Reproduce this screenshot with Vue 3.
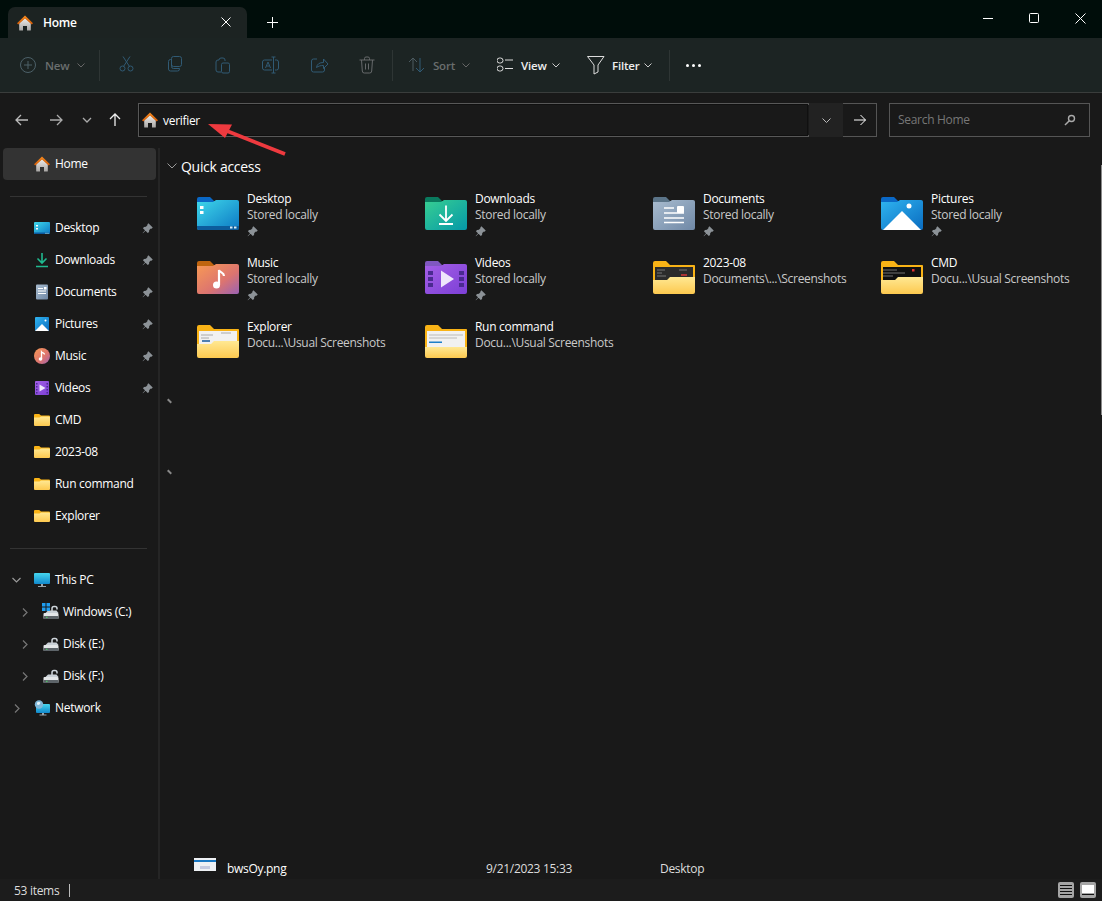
<script setup>
const pinned = [
  { name: "Desktop", icon: "nav-desktop" },
  { name: "Downloads", icon: "nav-downloads" },
  { name: "Documents", icon: "nav-documents" },
  { name: "Pictures", icon: "nav-pictures" },
  { name: "Music", icon: "nav-music" },
  { name: "Videos", icon: "nav-videos" },
];
const folders = ["CMD", "2023-08", "Run command", "Explorer"];
const drives = [
  { name: "Windows (C:)", icon: "drive-win" },
  { name: "Disk (E:)", icon: "drive-plain" },
  { name: "Disk (F:)", icon: "drive-plain" },
];
const quick = [
  { name: "Desktop", sub: "Stored locally", icon: "f-desktop", pin: true },
  { name: "Downloads", sub: "Stored locally", icon: "f-downloads", pin: true },
  { name: "Documents", sub: "Stored locally", icon: "f-documents", pin: true },
  { name: "Pictures", sub: "Stored locally", icon: "f-pictures", pin: true },
  { name: "Music", sub: "Stored locally", icon: "f-music", pin: true },
  { name: "Videos", sub: "Stored locally", icon: "f-videos", pin: true },
  { name: "2023-08", sub: "Documents\\...\\Screenshots", icon: "f-dark" },
  { name: "CMD", sub: "Docu...\\Usual Screenshots", icon: "f-cmd" },
  { name: "Explorer", sub: "Docu...\\Usual Screenshots", icon: "f-light" },
  { name: "Run command", sub: "Docu...\\Usual Screenshots", icon: "f-run" },
];
const actions = [
  "M3 13.5a2.5 2.5 0 1 0 5 0a2.5 2.5 0 1 0-5 0M11 13.5a2.5 2.5 0 1 0 5 0a2.5 2.5 0 1 0-5 0M6.5 11.5 13 1.5M12.5 11.5 6 1.5",
  "M3.5 6.5a2 2 0 0 1 2-2h1v7a2 2 0 0 0 2 2h6v.5a2 2 0 0 1-2 2h-7a2 2 0 0 1-2-2zM8.5 1.5h6a2 2 0 0 1 2 2v6a2 2 0 0 1-2 2h-6a2 2 0 0 1-2-2v-6a2 2 0 0 1 2-2z",
  "M6 5h-1a2 2 0 0 0-2 2v8a2 2 0 0 0 2 2h3M6 5a2 2 0 0 1 2-2h2a2 2 0 0 1 2 2v1M10 8h5a1.5 1.5 0 0 1 1.5 1.5v7a1.5 1.5 0 0 1-1.5 1.5h-5a1.5 1.5 0 0 1-1.5-1.5v-7a1.5 1.5 0 0 1 1.5-1.5z",
  "M11 5H3.5a2 2 0 0 0-2 2v6a2 2 0 0 0 2 2H11M14 5h1.500a2 2 0 0 1 2 2v6a2 2 0 0 1-2 2H14M12.500 2v16M10.500 2h4M10.500 18h4M4.500 13 7 7l2.500 6M5.500 11h3",
  "M8 4H4.500a2 2 0 0 0-2 2v9a2 2 0 0 0 2 2h9a2 2 0 0 0 2-2v-3M7.500 12.500c.5-3.500 3-5 7-5V4l4.500 5-4.500 4.500V10.500c-3 0-5 .5-7 2z",
  "M2.500 5h15M7.500 5V3.500a1.500 1.500 0 0 1 1.500-1.500h2a1.500 1.500 0 0 1 1.500 1.500V5M4.500 5l.8 11a2 2 0 0 0 2 2h5.400a2 2 0 0 0 2-2l.8-11M8.500 8.500v6M11.500 8.500v6",
];
</script>

<template>
  <div class="window">
    <!-- shared icon symbols -->
    <svg class="defs" width="0" height="0" aria-hidden="true">
      <defs>
        <linearGradient id="g-blue" x1="0" y1="0" x2="1" y2="1"><stop offset="0" stop-color="#3fd8ea" /><stop offset="1" stop-color="#0c78c4" /></linearGradient>
        <linearGradient id="g-teal" x1="0" y1="0" x2="1" y2="1"><stop offset="0" stop-color="#37cf92" /><stop offset="1" stop-color="#0598a8" /></linearGradient>
        <linearGradient id="g-grey" x1="0" y1="0" x2="1" y2="1"><stop offset="0" stop-color="#a9bccf" /><stop offset="1" stop-color="#6f88a6" /></linearGradient>
        <linearGradient id="g-pic" x1="0" y1="0" x2="1" y2="1"><stop offset="0" stop-color="#2fb4f0" /><stop offset="1" stop-color="#0a6cc0" /></linearGradient>
        <linearGradient id="g-music" x1="0" y1="0" x2="1" y2="1"><stop offset="0" stop-color="#f89a54" /><stop offset=".6" stop-color="#dc7470" /><stop offset="1" stop-color="#9a62b4" /></linearGradient>
        <linearGradient id="g-video" x1="0" y1="0" x2="1" y2="1"><stop offset="0" stop-color="#a45fe6" /><stop offset="1" stop-color="#7c3fd6" /></linearGradient>
        <linearGradient id="g-yellow" x1="0" y1="0" x2="0" y2="1"><stop offset="0" stop-color="#ffe893" /><stop offset="1" stop-color="#fdc94f" /></linearGradient>
        <linearGradient id="g-roof" x1="0" y1="0" x2="0" y2="1"><stop offset="0" stop-color="#f58a1f" /><stop offset="1" stop-color="#d25a06" /></linearGradient>
        <linearGradient id="g-wall" x1="0" y1="0" x2="0" y2="1"><stop offset="0" stop-color="#f0eeec" /><stop offset="1" stop-color="#a8a6a4" /></linearGradient>
        <linearGradient id="g-screen" x1="0" y1="0" x2="0" y2="1"><stop offset="0" stop-color="#45d6ee" /><stop offset="1" stop-color="#1188cc" /></linearGradient>

        <symbol id="home" viewBox="0 0 16 16">
          <path d="M2.200 8 8 3 13.800 8v7a.5.5 0 0 1-.5.5h-3.300V11H6v4.500H2.700a.5.5 0 0 1-.5-.5z" fill="url(#g-wall)" />
          <path d="M0 8.200 8 .5l8 7.700-1.300 1.300L8 3.400 1.300 9.500z" fill="url(#g-roof)" />
        </symbol>
        <symbol id="folder" viewBox="0 0 16 14">
          <path d="M0 2a1 1 0 0 1 1-1h4.200L7 2.500h8a1 1 0 0 1 1 1V6H0z" fill="#f9b316" />
          <path d="M0 4.500h5.500L7 3.500h8a1 1 0 0 1 1 1V12a1 1 0 0 1-1 1H1a1 1 0 0 1-1-1z" fill="url(#g-yellow)" />
        </symbol>

        <symbol id="nav-desktop" viewBox="0 0 16 16">
          <rect x="0" y="2" width="16" height="12" rx="1" fill="url(#g-blue)" />
          <path d="M0 12.500h16V13a1 1 0 0 1-1 1H1a1 1 0 0 1-1-1z" fill="#0a5aa0" />
          <rect x="2" y="5" width="2" height="1.500" fill="#fff" /><rect x="2" y="8" width="2" height="1.500" fill="#fff" />
          <rect x="11.500" y="12.800" width="1" height="1" fill="#cfe" /><rect x="13.500" y="12.800" width="1" height="1" fill="#cfe" />
        </symbol>
        <symbol id="nav-downloads" viewBox="0 0 16 16">
          <path d="M8 1v9.500M3.500 6.500 8 11 12.500 6.500M2 14.500h12" fill="none" stroke="#20b98f" stroke-width="1.600" />
        </symbol>
        <symbol id="nav-documents" viewBox="0 0 16 16">
          <rect x="2" y="0.500" width="12" height="15" rx="1" fill="url(#g-grey)" />
          <path d="M4 4.500h5M4 7h8M4 9.500h8" stroke="#fff" stroke-width="1" /><rect x="10" y="3" width="2.500" height="2.500" fill="#fff" />
        </symbol>
        <symbol id="nav-pictures" viewBox="0 0 16 16">
          <rect x="1" y="1" width="14" height="14" rx="1" fill="url(#g-pic)" />
          <path d="M1 15 8 8l7 7z" fill="#fff" /><circle cx="11.500" cy="4.500" r="1" fill="#fff" />
        </symbol>
        <symbol id="nav-music" viewBox="0 0 16 16">
          <circle cx="8" cy="8" r="8" fill="url(#g-music)" />
          <circle cx="6.500" cy="11" r="1.800" fill="#fff" /><path d="M7.500 11V3.800c1 1.400 3 1 3 2.700" fill="none" stroke="#fff" stroke-width="1.300" />
        </symbol>
        <symbol id="nav-videos" viewBox="0 0 16 16">
          <rect x="1" y="1" width="14" height="14" rx="1" fill="url(#g-video)" />
          <path d="M5.500 4.500 11.500 8 5.500 11.500z" fill="#eee6fb" />
          <path d="M2 3h1.500v1.500H2zM2 6h1.500v1.500H2zM2 9h1.500v1.500H2zM2 12h1.500v1.500H2zM12.500 3H14v1.500h-1.500zM12.500 6H14v1.500h-1.500zM12.500 9H14v1.500h-1.500zM12.500 12H14v1.500h-1.500z" fill="#4a2a90" />
        </symbol>
        <symbol id="monitor" viewBox="0 0 16 16">
          <rect x="0" y="1" width="16" height="11" rx="1" fill="url(#g-screen)" />
          <path d="M7 12h2v2h3v1H4v-1h3z" fill="#9aa4aa" />
        </symbol>
        <symbol id="drive" viewBox="0 0 16 16">
          <path d="M9 6.500V3.500a2 2 0 0 1 2-2h1a2 2 0 0 1 2 2v1" fill="none" stroke="#cfd6dc" stroke-width="1.500" />
          <path d="M2.500 8 5 5.500h8.500L15.500 8z" fill="#c9d0d6" />
          <rect x="0.500" y="8" width="15" height="6" rx="1" fill="#e3e6e8" />
          <rect x="0.500" y="11" width="15" height="3" rx=".8" fill="#5d6469" />
          <rect x="3" y="11.800" width="1.500" height="1" fill="#4cd964" />
        </symbol>
        <symbol id="drive-plain" viewBox="0 0 20 18">
          <use href="#drive" x="1" y="2" width="16" height="16" />
        </symbol>
        <symbol id="drive-win" viewBox="0 0 20 18">
          <use href="#drive" x="1" y="2" width="16" height="16" />
          <path d="M0 0h3.500v3.500H0zM4.500 0H8v3.500H4.500zM0 4.500h3.500V8H0zM4.500 4.500H8V8H4.500z" fill="#1e9df0" />
        </symbol>
        <symbol id="network" viewBox="0 0 16 16">
          <rect x="2" y="4" width="14" height="9" rx="1" fill="url(#g-screen)" />
          <path d="M8 13h2v1.500h2.500v1h-7v-1H8z" fill="#9aa4aa" />
          <circle cx="5" cy="4.500" r="4.200" fill="#7fb7d8" /><path d="M3 2.500c1.500-1 3-.5 3.500.5L5 5 3 4.500z" fill="#e6f4fb" />
        </symbol>

        <symbol id="tab-back" viewBox="0 0 42 34">
          <path d="M0 3a2 2 0 0 1 2-2h11l4 4h23a2 2 0 0 1 2 2v10H0z" />
        </symbol>
        <symbol id="f-desktop" viewBox="0 0 42 34">
          <use href="#tab-back" fill="#0a68c6" />
          <path d="M0 6h16l3-2h21a2 2 0 0 1 2 2v26a2 2 0 0 1-2 2H2a2 2 0 0 1-2-2z" fill="url(#g-blue)" />
          <path d="M0 30h42v2a2 2 0 0 1-2 2H2a2 2 0 0 1-2-2z" fill="#0c5c9c" />
          <rect x="3" y="10" width="3.500" height="3" fill="#fff" /><rect x="3" y="15" width="3.500" height="3" fill="#fff" />
          <rect x="33" y="30.500" width="2.500" height="2" fill="#d8eef8" /><rect x="37" y="30.500" width="2.500" height="2" fill="#d8eef8" />
        </symbol>
        <symbol id="f-downloads" viewBox="0 0 42 34">
          <use href="#tab-back" fill="#0a7a5e" />
          <path d="M0 6h16l3-2h21a2 2 0 0 1 2 2v26a2 2 0 0 1-2 2H2a2 2 0 0 1-2-2z" fill="url(#g-teal)" />
          <path d="M21 9.500v15M14.500 18.500l6.500 6.500 6.500-6.500M14 28h14" fill="none" stroke="#fff" stroke-width="1.800" />
        </symbol>
        <symbol id="f-documents" viewBox="0 0 42 34">
          <use href="#tab-back" fill="#5b7488" />
          <path d="M0 6h16l3-2h21a2 2 0 0 1 2 2v26a2 2 0 0 1-2 2H2a2 2 0 0 1-2-2z" fill="url(#g-grey)" />
          <path d="M11 12h10M11 17h20M11 22h20M11 26.500h20" stroke="#fff" stroke-width="1.600" />
          <rect x="24" y="10" width="7" height="7" rx="1" fill="#fff" />
        </symbol>
        <symbol id="f-pictures" viewBox="0 0 42 34">
          <use href="#tab-back" fill="#0a68c6" />
          <path d="M0 6h16l3-2h21a2 2 0 0 1 2 2v26a2 2 0 0 1-2 2H2a2 2 0 0 1-2-2z" fill="url(#g-pic)" />
          <path d="M2 34 21 15l19 19z" fill="#fff" /><circle cx="28" cy="10" r="2.500" fill="#fff" />
        </symbol>
        <symbol id="f-music" viewBox="0 0 42 34">
          <use href="#tab-back" fill="#c0650f" />
          <path d="M0 6h16l3-2h21a2 2 0 0 1 2 2v26a2 2 0 0 1-2 2H2a2 2 0 0 1-2-2z" fill="url(#g-music)" />
          <circle cx="19.500" cy="25" r="3.500" fill="#fff" /><path d="M22 25V10c1 3 5 2 5 6" fill="none" stroke="#fff" stroke-width="2.200" />
        </symbol>
        <symbol id="f-videos" viewBox="0 0 42 34">
          <use href="#tab-back" fill="#8058c0" />
          <path d="M0 6h16l3-2h21a2 2 0 0 1 2 2v26a2 2 0 0 1-2 2H2a2 2 0 0 1-2-2z" fill="url(#g-video)" />
          <path d="M16 10.500 29 19 16 27.500z" fill="#eee6fb" />
          <path d="M3 11h5v4H3zM3 17h5v4H3zM3 23h5v4H3zM34 11h5v4h-5zM34 17h5v4h-5zM34 23h5v4h-5z" fill="#4a2a90" />
        </symbol>
        <symbol id="f-dark" viewBox="0 0 42 34">
          <use href="#tab-back" fill="#f9b316" />
          <rect x="0" y="5" width="42" height="20" rx="1" fill="#f9b316" />
          <rect x="2" y="7" width="38" height="16" fill="#2b2b2b" />
          <path d="M4 10h8M4 13h5M4 16h9M26 10h8" stroke="#777" stroke-width="1" />
          <rect x="28" y="14" width="6" height="2" fill="#a33" />
          <path d="M0 20h14l3-3h25v15a2 2 0 0 1-2 2H2a2 2 0 0 1-2-2z" fill="url(#g-yellow)" />
        </symbol>
        <symbol id="f-cmd" viewBox="0 0 42 34">
          <use href="#tab-back" fill="#f9b316" />
          <rect x="0" y="5" width="42" height="20" rx="1" fill="#f9b316" />
          <rect x="2" y="7" width="38" height="16" fill="#101010" />
          <path d="M2 10h14M2 13h22M2 16h10" stroke="#8a8a8a" stroke-width=".8" />
          <rect x="31" y="9" width="2.500" height="2.500" fill="#e03030" />
          <path d="M0 20h14l3-3h25v15a2 2 0 0 1-2 2H2a2 2 0 0 1-2-2z" fill="url(#g-yellow)" />
        </symbol>
        <symbol id="f-light" viewBox="0 0 42 34">
          <use href="#tab-back" fill="#f9b316" />
          <rect x="0" y="5" width="42" height="20" rx="1" fill="#f9b316" />
          <rect x="2" y="7" width="38" height="16" fill="#f1f1f1" />
          <path d="M4 11h12M4 14h8M24 9h10" stroke="#aaa" stroke-width="1" />
          <rect x="5" y="16" width="8" height="2" fill="#4f7fb0" />
          <path d="M0 20h14l3-3h25v15a2 2 0 0 1-2 2H2a2 2 0 0 1-2-2z" fill="url(#g-yellow)" />
        </symbol>
        <symbol id="f-run" viewBox="0 0 42 34">
          <use href="#tab-back" fill="#f9b316" />
          <rect x="0" y="5" width="42" height="20" rx="1" fill="#f9b316" />
          <rect x="2" y="7" width="38" height="16" fill="#f1f1f1" />
          <path d="M4 11h34M4 14h28" stroke="#bbb" stroke-width="1" />
          <rect x="4" y="17.500" width="13" height="1.500" fill="#1e7fc8" />
          <path d="M0 23h42v9a2 2 0 0 1-2 2H2a2 2 0 0 1-2-2z" fill="url(#g-yellow)" />
        </symbol>
        <symbol id="pin" viewBox="0 0 12 12">
          <path d="M7 .3 11.700 5 10.500 6.200 9.700 5.900 7.900 7.700 7.700 9.800 6.300 11 1 5.700 2.200 4.300 4.300 4.100 6.100 2.300 5.800 1.500zM3.800 8.400 1 11.300.7 11 3.400 7.900z" fill="#8c9297" />
        </symbol>
      </defs>
    </svg>

    <header class="titlebar">
      <div class="tab">
        <svg class="tab-icon" width="16" height="16"><use href="#home" /></svg>
        <span class="tab-title">Home</span>
        <svg class="tab-close" width="10" height="10" viewBox="0 0 10 10"><path d="M.5.500l9 9M9.500.500l-9 9" stroke="#fff" fill="none" /></svg>
      </div>
      <svg class="tab-add" width="11" height="11" viewBox="0 0 11 11"><path d="M5.500 0v11M0 5.500h11" stroke="#fff" fill="none" /></svg>
      <div class="win-controls">
        <svg width="10" height="10" viewBox="0 0 10 10"><path d="M0 5.500h10" stroke="#fff" fill="none" /></svg>
        <svg width="10" height="10" viewBox="0 0 10 10"><rect x=".5" y=".5" width="9" height="9" rx="1" stroke="#fff" fill="none" /></svg>
        <svg width="11" height="11" viewBox="0 0 11 11"><path d="M.5.500l10 10M10.500.500l-10 10" stroke="#fff" fill="none" /></svg>
      </div>
    </header>

    <div class="toolbar">
      <button class="tool off new-btn">
        <svg width="18" height="18" viewBox="0 0 18 18"><path d="M9 5v8M5 9h8M9 1.500a7.500 7.500 0 1 0 0 15a7.500 7.500 0 1 0 0-15z" fill="none" stroke="#4c6068" /></svg>
        <span>New</span>
        <svg class="chev" width="8" height="5" viewBox="0 0 8 5"><path d="M.5.500 4 4 7.500.500" fill="none" stroke="#666" /></svg>
      </button>
      <i class="sep"></i>
      <div class="actions">
        <svg v-for="(d, i) in actions" :key="i" width="20" height="20" viewBox="0 0 20 20">
          <path :d="d" fill="none" :stroke="i === 5 ? '#66696b' : '#305a74'" />
        </svg>
      </div>
      <i class="sep"></i>
      <button class="tool off sort-btn">
        <svg width="18" height="18" viewBox="0 0 18 18"><path d="M5 15V2M1 6l4-4 4 4" fill="none" stroke="#4c5a60" /><path d="M12 2v14M8 12l4 4 4-4" fill="none" stroke="#305a74" /></svg>
        <span>Sort</span>
        <svg class="chev" width="8" height="5" viewBox="0 0 8 5"><path d="M.5.500 4 4 7.500.500" fill="none" stroke="#666" /></svg>
      </button>
      <button class="tool view-btn">
        <svg width="17" height="16" viewBox="0 0 17 16"><path d="M2.500 1h1a1.500 1.500 0 0 1 0 5h-1a1.500 1.500 0 0 1 0-5zM2.500 9h1a1.500 1.500 0 0 1 0 5h-1a1.500 1.500 0 0 1 0-5zM8 3h8M8 11.500h8" fill="none" stroke="#ddd" /></svg>
        <span>View</span>
        <svg class="chev" width="8" height="5" viewBox="0 0 8 5"><path d="M.5.500 4 4 7.500.500" fill="none" stroke="#ccc" /></svg>
      </button>
      <button class="tool filter-btn">
        <svg width="18" height="20" viewBox="0 0 18 20"><path d="M.5 1.500h16.500L11 10v7l-4 2v-9z" fill="none" stroke="#ddd" /></svg>
        <span>Filter</span>
        <svg class="chev" width="8" height="5" viewBox="0 0 8 5"><path d="M.5.500 4 4 7.500.500" fill="none" stroke="#ccc" /></svg>
      </button>
      <i class="sep"></i>
      <span class="more"><b></b><b></b><b></b></span>
    </div>

    <div class="addressrow">
      <div class="nav-btns">
        <svg width="14" height="12" viewBox="0 0 14 12"><path d="M13 6H1M6 1 1 6l5 5" fill="none" stroke="#bbb" stroke-width="1.300" /></svg>
        <svg width="14" height="12" viewBox="0 0 14 12"><path d="M1 6h12M8 1l5 5-5 5" fill="none" stroke="#aaa" stroke-width="1.300" /></svg>
        <svg width="10" height="6" viewBox="0 0 10 6"><path d="M1 1l4 4 4-4" fill="none" stroke="#aaa" stroke-width="1.300" /></svg>
        <svg width="12" height="14" viewBox="0 0 12 14"><path d="M6 13V1M1 6l5-5 5 5" fill="none" stroke="#eee" stroke-width="1.300" /></svg>
      </div>
      <div class="addressbar">
        <div class="addr-input">
          <svg width="16" height="16"><use href="#home" /></svg>
          <span>verifier</span>
        </div>
        <div class="addr-drop">
          <svg width="9" height="5" viewBox="0 0 9 5"><path d="M.5.500l4 4 4-4" fill="none" stroke="#bbb" /></svg>
        </div>
        <div class="addr-go">
          <svg width="12" height="12" viewBox="0 0 12 12"><path d="M0 6h11.500M6.500 1l5 5-5 5" fill="none" stroke="#fff" /></svg>
        </div>
      </div>
      <div class="search">
        <span>Search Home</span>
        <svg width="12" height="12" viewBox="0 0 12 12"><circle cx="7.500" cy="4.500" r="3" fill="none" stroke="#aaa" stroke-width="1.400" /><path d="M5.300 6.700 1 11" stroke="#aaa" stroke-width="1.500" /></svg>
      </div>
    </div>

    <div class="body">
      <aside class="sidebar">
        <div class="nav-row home-row">
          <svg width="16" height="16"><use href="#home" /></svg>
          <span>Home</span>
        </div>
        <hr class="rule first" />
        <div v-for="p in pinned" :key="p.name" class="nav-row">
          <svg width="16" height="16"><use :href="'#' + p.icon" /></svg>
          <span>{{ p.name }}</span>
          <svg class="nav-pin" width="11" height="11"><use href="#pin" /></svg>
        </div>
        <div v-for="f in folders" :key="f" class="nav-row">
          <svg width="16" height="14"><use href="#folder" /></svg>
          <span>{{ f }}</span>
        </div>
        <hr class="rule second" />
        <div class="nav-row">
          <svg class="caret" width="9" height="6" viewBox="0 0 9 6"><path d="M.5 1l4 4 4-4" fill="none" stroke="#999" stroke-width="1.200" /></svg>
          <svg width="16" height="16"><use href="#monitor" /></svg>
          <span>This PC</span>
        </div>
        <div v-for="d in drives" :key="d.name" class="nav-row drive-row">
          <svg class="caret" width="6" height="9" viewBox="0 0 6 9"><path d="M1 .5l4 4-4 4" fill="none" stroke="#777" stroke-width="1.200" /></svg>
          <svg width="20" height="18"><use :href="'#' + d.icon" /></svg>
          <span>{{ d.name }}</span>
        </div>
        <div class="nav-row">
          <svg class="caret net" width="6" height="9" viewBox="0 0 6 9"><path d="M1 .5l4 4-4 4" fill="none" stroke="#777" stroke-width="1.200" /></svg>
          <svg width="16" height="16"><use href="#network" /></svg>
          <span>Network</span>
        </div>
      </aside>

      <main class="content">
        <div class="group-head">
          <svg width="10" height="6" viewBox="0 0 10 6"><path d="M.5.500 5 5 9.500.500" fill="none" stroke="#999" /></svg>
          <span>Quick access</span>
        </div>
        <div class="grid">
          <div v-for="q in quick" :key="q.name" class="tile">
            <svg class="tile-icon" width="42" height="34"><use :href="'#' + q.icon" /></svg>
            <div class="tile-text">
              <div class="tile-name">{{ q.name }}</div>
              <div class="tile-sub">{{ q.sub }}</div>
              <svg v-if="q.pin" class="tile-pin" width="11" height="11"><use href="#pin" /></svg>
            </div>
          </div>
        </div>
        <div class="file-row">
          <svg width="22" height="13" viewBox="0 0 22 13"><rect width="22" height="13" fill="#eef1f4" /><rect y="2" width="22" height="2" fill="#1a78c2" /><rect x="6" y="8" width="10" height="3" fill="#c5cbe0" /></svg>
          <span class="file-name">bwsOy.png</span>
          <span class="file-date">9/21/2023 15:33</span>
          <span class="file-loc">Desktop</span>
        </div>
        <i class="mark mark-a"></i>
        <i class="mark mark-b"></i>
        <i class="scrollbar"></i>
      </main>
    </div>

    <footer class="statusbar">
      <span>53 items</span>
      <i class="status-sep"></i>
      <div class="view-toggle">
        <span class="vt list"><b></b><b></b><b></b><b></b></span>
        <span class="vt tiles"><em></em><b></b></span>
      </div>
    </footer>

    <svg class="arrow" width="90" height="40" viewBox="0 0 90 40">
      <path d="M85 34 22 9" stroke="#ee3a3f" stroke-width="3.600" fill="none" />
      <path d="M8 4 32 4.500 25 18z" fill="#ee3a3f" />
    </svg>
  </div>
</template>

<style scoped>
.window {
  position: relative;
  width: 1102px;
  height: 901px;
  display: flex;
  flex-direction: column;
  overflow: hidden;
  background: #191919;
  color: #fff;
  font-family: "Open Sans", "Noto Sans", sans-serif;
  font-size: 12px;
  letter-spacing: -0.3px;
}
.defs {
  position: absolute;
}
svg {
  display: block;
  flex: none;
}
button {
  all: unset;
  display: flex;
  align-items: center;
}

.titlebar {
  height: 38px;
  flex: none;
  display: flex;
  align-items: flex-end;
  background: #000d0a;
  padding-left: 8px;
  position: relative;
}
.tab {
  width: 239px;
  height: 31px;
  box-sizing: border-box;
  display: flex;
  align-items: center;
  padding: 0 9px;
  background: #1c2322;
  border-radius: 7px 7px 0 0;
}
.tab-title {
  margin-left: 10px;
  font-weight: 600;
  font-size: 12px;
  flex: 1;
}
.tab-close {
  margin-right: 7px;
  margin-bottom: 2px;
}
.tab-add {
  margin: 0 0 10px 20px;
}
.win-controls {
  margin-left: auto;
  align-self: flex-start;
  display: flex;
  align-items: center;
  gap: 36px;
  height: 36px;
  padding-right: 16px;
}

.toolbar {
  height: 54px;
  flex: none;
  display: flex;
  align-items: center;
  background: #1c2423;
  border-bottom: 1px solid #3a3d3c;
  padding-left: 19px;
  box-sizing: content-box;
}
.tool {
  gap: 7px;
}
.tool span {
  color: #eee;
  font-weight: 600;
  font-size: 11.5px;
  letter-spacing: -0.2px;
}
.tool.off span {
  color: #6a6e6e;
}
.view-btn .chev,
.filter-btn .chev {
  margin-left: -2px;
}
.new-btn {
  width: 80px;
  gap: 8px;
}
.sep {
  width: 1px;
  height: 31px;
  background: #2e3534;
  flex: none;
}
.actions {
  display: flex;
  gap: 28px;
  padding-left: 17px;
  width: 292px;
  box-sizing: border-box;
}
.sort-btn {
  width: 90px;
  padding-left: 15px;
  box-sizing: border-box;
}
.view-btn {
  width: 104px;
  padding-left: 14px;
  box-sizing: border-box;
}
.filter-btn {
  width: 82px;
  box-sizing: border-box;
}
.more {
  display: flex;
  gap: 3px;
  margin-left: 16px;
}
.more b {
  width: 3px;
  height: 3px;
  border-radius: 50%;
  background: #fff;
}

.addressrow {
  height: 55px;
  flex: none;
  display: flex;
  align-items: center;
  padding-bottom: 1px;
  box-sizing: border-box;
}
.nav-btns {
  width: 138px;
  flex: none;
  display: grid;
  grid-template-columns: 35px 34px 27px 30px;
  align-items: center;
  justify-items: center;
  padding-left: 4px;
  box-sizing: border-box;
}
.addressbar {
  display: flex;
  width: 739px;
  height: 34px;
}
.addr-input {
  flex: 1;
  display: flex;
  align-items: center;
  gap: 5px;
  padding-left: 3px;
  border: 1px solid #585858;
  border-top-width: 2px;
  border-bottom-width: 2px;
  border-right: none;
  outline: 1px solid #101010;
  outline-offset: -2px;
  box-sizing: border-box;
}
.addr-drop {
  width: 34px;
  display: flex;
  align-items: center;
  justify-content: center;
  background: #222;
}
.addr-go {
  width: 34px;
  display: flex;
  align-items: center;
  justify-content: center;
  border: 1px solid #555;
  border-left: none;
  box-sizing: border-box;
}
.search {
  width: 201px;
  height: 34px;
  margin-left: 12px;
  box-sizing: border-box;
  display: flex;
  align-items: center;
  justify-content: space-between;
  padding: 0 13px 1px 8px;
  border: 1px solid #555;
  color: #777;
}

.body {
  flex: 1;
  min-height: 0;
  display: flex;
}
.sidebar {
  flex: none;
  padding: 0 3px;
  box-sizing: border-box;
  border-right: 2px solid #252525;
  width: 160px;
}
.nav-row {
  height: 32px;
  display: flex;
  align-items: center;
  padding-left: 31px;
  gap: 5px;
  position: relative;
}
.nav-row span {
  margin-top: -1px;
}
.home-row {
  width: 153px;
  background: #333;
  border-radius: 4px;
  box-sizing: border-box;
}
.rule {
  height: 1px;
  border: none;
  background: #333;
  margin: 0 8px 0 7px;
}
.rule.first {
  margin-top: 16px;
  margin-bottom: 15px;
}
.rule.second {
  margin-top: 16px;
  margin-bottom: 15px;
}
.nav-pin {
  position: absolute;
  left: 139px;
  top: 11px;
}
.caret {
  position: absolute;
  left: 9px;
  top: 13px;
}
.drive-row {
  padding-left: 39px;
  gap: 1px;
}
.drive-row .caret {
  left: 19px;
  top: 12px;
}
.caret.net {
  left: 11px;
  top: 12px;
}

.content {
  flex: 1;
  position: relative;
  padding: 7px 0 0 7px;
  display: flex;
  flex-direction: column;
}
.group-head {
  display: flex;
  align-items: center;
  gap: 4px;
  font-size: 14px;
  height: 22px;
  margin-bottom: 11px;
}
.grid {
  display: grid;
  grid-template-columns: repeat(4, 228px);
  grid-auto-rows: 64px;
  padding-left: 30px;
  flex: 1;
  align-content: start;
}
.tile {
  display: flex;
  gap: 8px;
}
.tile-icon {
  margin-top: 8px;
}
.tile-text {
  line-height: 16px;
  padding-top: 3px;
}
.tile-sub {
  color: #c9c9c9;
  white-space: nowrap;
}
.tile-pin {
  margin-top: 3px;
}
.file-row {
  height: 22px;
  display: flex;
  align-items: center;
  padding-left: 27px;
  position: relative;
}
.file-row svg {
  margin-top: -8px;
}
.file-name {
  margin-left: 11px;
  width: 259px;
}
.file-date {
  width: 174px;
  color: #ddd;
}
.file-loc {
  color: #ddd;
}
.mark {
  position: absolute;
  left: 7px;
  width: 5px;
  height: 2px;
  background: #888;
  transform: rotate(45deg);
}
.mark-a {
  top: 252px;
}
.mark-b {
  top: 323px;
}
.scrollbar {
  position: absolute;
  right: 6px;
  top: 17px;
  width: 2px;
  height: 250px;
  background: #8a8a8a;
}

.statusbar {
  height: 22px;
  flex: none;
  display: flex;
  align-items: center;
  padding-left: 14px;
  color: #ddd;
  background: #1c1c1c;
}
.status-sep {
  width: 1px;
  height: 13px;
  background: #bbb;
  margin-left: 10px;
}
.view-toggle {
  margin-left: auto;
  display: flex;
  gap: 6px;
  padding-right: 6px;
}
.vt {
  width: 16px;
  height: 16px;
  box-sizing: border-box;
  border-radius: 2px;
  background: #a5a5a5;
  display: flex;
  flex-direction: column;
  justify-content: center;
  padding: 2px;
  gap: 2px;
}
.vt b {
  display: block;
  height: 1px;
  background: #111;
}
.vt.tiles {
  gap: 1px;
}
.vt.tiles em {
  display: block;
  height: 8px;
  background: #fff;
}

.arrow {
  position: absolute;
  left: 200px;
  top: 120px;
}
</style>
